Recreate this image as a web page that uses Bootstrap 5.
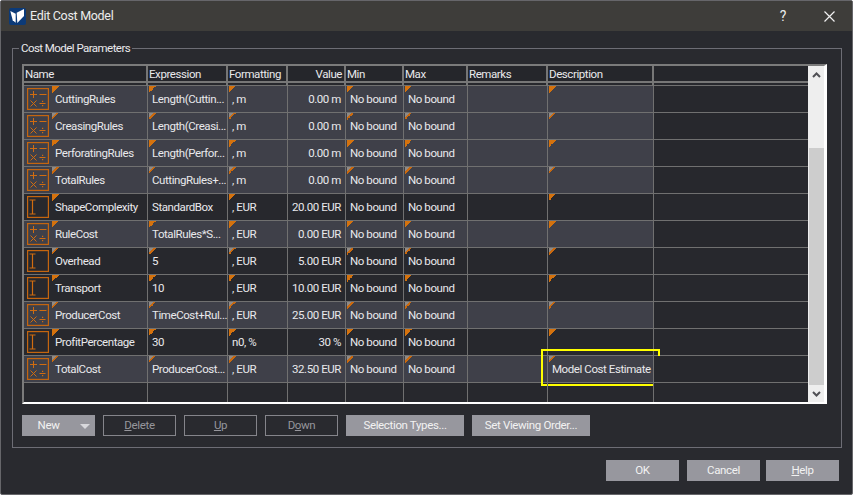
<!DOCTYPE html>
<html lang="en">
<head>
<meta charset="utf-8">
<title>Edit Cost Model</title>
<link rel="stylesheet" href="https://cdn.jsdelivr.net/npm/bootstrap@5.3.0/dist/css/bootstrap.min.css">
<style>
html,body{width:853px;height:495px;overflow:hidden;background:#fff;}
body{font-family:Roboto,"Liberation Sans",sans-serif;font-size:11.5px;letter-spacing:-.42px;line-height:1;color:#e9e9ec;}
.win{width:853px;height:495px;background:#292a2f;border:1px solid #66666a;border-radius:2px;}
.tbar{height:30px;background:#3e3d3a;padding:0 17px 0 8px;font-size:12.5px;letter-spacing:-.3px;color:#ececec;}
.logo{width:17px;height:17px;margin-right:4px;}
.qmark{font-size:14px;margin-right:38px;}
.fset{margin:9px 10px 0 11px;padding:0 14px 11px 9px;border:1px solid #6d6d75;min-width:0;}
.fset legend{float:none;width:auto;font-size:11.5px;letter-spacing:-.55px;line-height:16px;margin:0 0 8px -3px;padding:0 2px;color:#e9e9ec;}
.grid-wrap{height:340px;border-top:2px solid #7b7b7b;border-left:2px solid #7b7b7b;border-right:3px solid #fff;border-bottom:2px solid #fff;}
.grid-main{width:784px;overflow:hidden;background:#27282d;}
.ptable{width:784px;table-layout:fixed;border-collapse:separate;border-spacing:0;}
.ptable th{height:17px;background:#25262b;font-weight:400;padding:2px 2px 0 1px;border-right:2px solid #777;border-bottom:2px solid #777;white-space:nowrap;}
.ptable th.hv{text-align:right;}
.ptable th:last-child{border-right:0;}
.ptable .gap td{height:3px;padding:0;background:#27282d;border-right:2px solid #777;}
.ptable .gap td:last-child{border-right:0;}
.ptable .gap td{border-bottom:1px solid #707070;}
.ptable td{height:27px;padding:2px 4px 0;border-right:1px solid #707070;border-bottom:1px solid #707070;white-space:nowrap;overflow:hidden;position:relative;}
.ptable td:last-child{border-right:0;background:#27282d;}
.ptable .rl td{background:#3f4049;}
.ptable .rd td{background:#27282d;}
.ptable .rl td:last-child{background:#27282d;}
.ptable .blank td{height:19px;border-bottom:0;}
.ptable .cell-d{overflow:visible;}
.ptable .cname{padding:0 0 0 3px;}
.nm{margin:2px 0 0 6px;}
.ico{width:22px;height:22px;flex:none;}
.tri::before{content:"";position:absolute;left:1px;top:0;width:7px;height:7px;background:linear-gradient(135deg,#d4720e 50%,transparent 50%);}
.hol .tri::before{background:linear-gradient(135deg,#8f8a86 35%,#c9690f 35% 50%,transparent 50%);}
.tri-n::before{left:28px;}
.hilite{position:absolute;left:-7px;top:-7px;width:119px;height:37px;border:2px solid #ffff00;pointer-events:none;}
.sbar{width:16px;background:#eeeeee;}
.sb-btn{height:17px;}
.sb-track{flex:1 1 auto;}
.sb-thumb{height:237px;background:#cdcdcd;margin-left:1px;}
.sb-arrow{width:9px;height:6px;}
.act{background:#97979e;border:0;border-radius:0;color:#f2f2f2;font-size:11.5px;letter-spacing:-.35px;line-height:1;padding:0;height:21px;width:73px;}
.act:hover,.act:disabled{background:#97979e;color:#f2f2f2;}
.act-off{background:transparent;border:1px solid #85858b;color:#96969c;}
.act-off:disabled{background:transparent;border:1px solid #85858b;color:#96969c;opacity:1;}
.act-wide{width:118px;}
.act-new{position:relative;}
.tools{margin-top:11px;gap:8px;}
.foot{margin:12px 13px 0 0;}
.drop{position:absolute;right:5px;top:9px;width:0;height:0;border-left:5px solid transparent;border-right:5px solid transparent;border-top:5px solid #d8d8dc;}
.gap-c{margin-right:8px;}
.gap-h{margin-right:6px;}
.ml-new{padding-right:20px;}
</style>
</head>
<body>
<svg width="0" height="0" class="d-block position-absolute">
  <defs>
    <symbol id="calc" viewBox="0 0 22 22">
      <rect x=".6" y=".6" width="20.8" height="20.8" fill="none" stroke="#c4650f" stroke-width="1.2"/>
      <path d="M3 6.500h7M6.500 3v7M12.500 6.500h7M3.500 12.500l6 6M9.500 12.500l-6 6M12.500 15.500h6" fill="none" stroke="#d06c10" stroke-width="1"/>
      <path d="M15 12.800h1.200V14H15zM15 17h1.200v1.200H15z" fill="#d06c10"/>
    </symbol>
    <symbol id="beam" viewBox="0 0 22 22">
      <rect x=".6" y=".6" width="20.8" height="20.8" fill="none" stroke="#c4650f" stroke-width="1.2"/>
      <path d="M2.500 4h6M2.500 18h6M5.500 4v14" fill="none" stroke="#d06c10" stroke-width="1.200"/>
    </symbol>
  </defs>
</svg>
<div class="win d-flex flex-column">
  <div class="tbar d-flex align-items-center">
    <svg class="logo" viewBox="0 0 17 17"><rect width="17" height="17" rx="2" fill="#0b3a78"/><path d="M1.300 3 6.700 5.700V14.700L3.700 12.300z" fill="#fff"/><path d="M7.700 4.700 15 1V8L8.300 15z" fill="#fff"/></svg>
    <span>Edit Cost Model</span>
    <span class="qmark ms-auto">?</span>
    <svg width="11" height="11" viewBox="0 0 11 11"><path d="M.5.5l10 10M10.500.5l-10 10" stroke="#f0f0f0" stroke-width="1.200" fill="none"/></svg>
  </div>
  <fieldset class="fset">
    <legend>Cost Model Parameters</legend>
    <div class="grid-wrap d-flex">
      <div class="grid-main">
        <table class="ptable">
          <colgroup><col style="width:124px"><col style="width:80px"><col style="width:60px"><col style="width:58px"><col style="width:58px"><col style="width:64px"><col style="width:80px"><col style="width:106px"><col style="width:154px"></colgroup>
          <thead>
            <tr><th>Name</th><th>Expression</th><th>Formatting</th><th class="hv">Value</th><th>Min</th><th>Max</th><th>Remarks</th><th>Description</th><th></th></tr>
          </thead>
          <tbody>
            <tr class="gap"><td></td><td></td><td></td><td></td><td></td><td></td><td></td><td></td><td></td></tr>
            <tr class="rl"><td class="cname tri tri-n"><div class="d-flex align-items-center"><svg class="ico"><use href="#calc"/></svg><span class="nm">CuttingRules</span></div></td><td class="tri">Length(Cuttin...</td><td class="tri">, m</td><td class="text-end">0.00 m</td><td class="tri">No bound</td><td class="tri">No bound</td><td></td><td class="tri"></td><td></td></tr>
            <tr class="rl hol"><td class="cname tri tri-n"><div class="d-flex align-items-center"><svg class="ico"><use href="#calc"/></svg><span class="nm">CreasingRules</span></div></td><td class="tri">Length(Creasi...</td><td class="tri">, m</td><td class="text-end">0.00 m</td><td class="tri">No bound</td><td class="tri">No bound</td><td></td><td class="tri"></td><td></td></tr>
            <tr class="rl"><td class="cname tri tri-n"><div class="d-flex align-items-center"><svg class="ico"><use href="#calc"/></svg><span class="nm">PerforatingRules</span></div></td><td class="tri">Length(Perfor...</td><td class="tri">, m</td><td class="text-end">0.00 m</td><td class="tri">No bound</td><td class="tri">No bound</td><td></td><td class="tri"></td><td></td></tr>
            <tr class="rl hol"><td class="cname tri tri-n"><div class="d-flex align-items-center"><svg class="ico"><use href="#calc"/></svg><span class="nm">TotalRules</span></div></td><td class="tri">CuttingRules+...</td><td class="tri">, m</td><td class="text-end">0.00 m</td><td class="tri">No bound</td><td class="tri">No bound</td><td></td><td class="tri"></td><td></td></tr>
            <tr class="rd"><td class="cname tri tri-n"><div class="d-flex align-items-center"><svg class="ico"><use href="#beam"/></svg><span class="nm">ShapeComplexity</span></div></td><td>StandardBox</td><td class="tri">, EUR</td><td class="text-end">20.00 EUR</td><td>No bound</td><td>No bound</td><td></td><td class="tri"></td><td></td></tr>
            <tr class="rl"><td class="cname tri tri-n"><div class="d-flex align-items-center"><svg class="ico"><use href="#calc"/></svg><span class="nm">RuleCost</span></div></td><td class="tri">TotalRules*S...</td><td class="tri">, EUR</td><td class="text-end">0.00 EUR</td><td class="tri">No bound</td><td class="tri">No bound</td><td></td><td class="tri"></td><td></td></tr>
            <tr class="rd hol"><td class="cname tri tri-n"><div class="d-flex align-items-center"><svg class="ico"><use href="#beam"/></svg><span class="nm">Overhead</span></div></td><td class="tri">5</td><td class="tri">, EUR</td><td class="text-end">5.00 EUR</td><td class="tri">No bound</td><td class="tri">No bound</td><td></td><td class="tri"></td><td></td></tr>
            <tr class="rd"><td class="cname tri tri-n"><div class="d-flex align-items-center"><svg class="ico"><use href="#beam"/></svg><span class="nm">Transport</span></div></td><td class="tri">10</td><td class="tri">, EUR</td><td class="text-end">10.00 EUR</td><td class="tri">No bound</td><td class="tri">No bound</td><td></td><td class="tri"></td><td></td></tr>
            <tr class="rl hol"><td class="cname tri tri-n"><div class="d-flex align-items-center"><svg class="ico"><use href="#calc"/></svg><span class="nm">ProducerCost</span></div></td><td class="tri">TimeCost+Rul...</td><td class="tri">, EUR</td><td class="text-end">25.00 EUR</td><td class="tri">No bound</td><td class="tri">No bound</td><td></td><td class="tri"></td><td></td></tr>
            <tr class="rd"><td class="cname tri tri-n"><div class="d-flex align-items-center"><svg class="ico"><use href="#beam"/></svg><span class="nm">ProfitPercentage</span></div></td><td class="tri">30</td><td class="tri">n0, %</td><td class="text-end">30 %</td><td class="tri">No bound</td><td class="tri">No bound</td><td></td><td class="tri"></td><td></td></tr>
            <tr class="rl hol"><td class="cname tri tri-n"><div class="d-flex align-items-center"><svg class="ico"><use href="#calc"/></svg><span class="nm">TotalCost</span></div></td><td class="tri">ProducerCost...</td><td class="tri">, EUR</td><td class="text-end">32.50 EUR</td><td class="tri">No bound</td><td class="tri">No bound</td><td></td><td class="tri cell-d">Model Cost Estimate<span class="hilite"></span></td><td></td></tr>
            <tr class="blank"><td></td><td></td><td></td><td></td><td></td><td></td><td></td><td></td><td></td></tr>
          </tbody>
        </table>
      </div>
      <div class="sbar d-flex flex-column">
        <div class="sb-btn d-flex align-items-center justify-content-center"><svg class="sb-arrow" viewBox="0 0 9 6"><path d="M1 5 4.500 1.500 8 5" fill="none" stroke="#505055" stroke-width="2"/></svg></div>
        <div class="sb-track d-flex flex-column justify-content-end"><div class="sb-thumb"></div></div>
        <div class="sb-btn d-flex align-items-center justify-content-center"><svg class="sb-arrow" viewBox="0 0 9 6"><path d="M1 1 4.500 4.500 8 1" fill="none" stroke="#505055" stroke-width="2"/></svg></div>
      </div>
    </div>
    <div class="tools d-flex">
      <button type="button" class="btn act act-new ml-new">New<span class="drop"></span></button>
      <button type="button" class="btn act act-off" disabled><u>D</u>elete</button>
      <button type="button" class="btn act act-off" disabled><u>U</u>p</button>
      <button type="button" class="btn act act-off" disabled>D<u>o</u>wn</button>
      <button type="button" class="btn act act-wide">Selection Types...</button>
      <button type="button" class="btn act act-wide">Set Viewing Order...</button>
    </div>
  </fieldset>
  <div class="foot d-flex justify-content-end">
    <button type="button" class="btn act gap-c">OK</button>
    <button type="button" class="btn act gap-h">Cancel</button>
    <button type="button" class="btn act"><u>H</u>elp</button>
  </div>
</div>
</body>
</html>
